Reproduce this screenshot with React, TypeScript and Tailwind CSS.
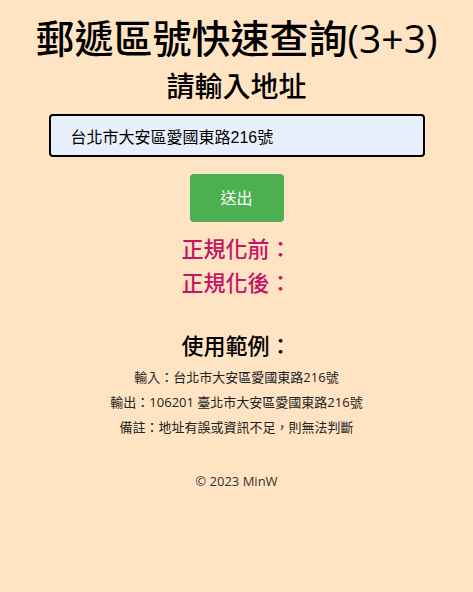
import { useState } from "react";

const font = "font-['Open_Sans','Noto_Sans_CJK_TC',sans-serif]";

export default function App() {
  const [addr, setAddr] = useState("台北市大安區愛國東路216號");

  return (
    <div className={`min-h-[592px] bg-[#ffe4c4] text-center text-black ${font}`}>
      <h1 className="pt-[10px] text-[39px] font-medium leading-[56px]">郵遞區號快速查詢(3+3)</h1>
      <h2 className="text-[28px] font-medium leading-[40px]">請輸入地址</h2>

      <div className="mt-[8px] flex justify-center">
        <input
          value={addr}
          onChange={(e) => setAddr(e.target.value)}
          className="h-[43px] w-[376px] rounded-[4px] border-2 border-black bg-[#e8f0fe] pl-[20px] font-['Liberation_Sans','Noto_Sans_CJK_TC',sans-serif] text-[16px] outline-none"
        />
      </div>

      <button className="mt-[17px] h-[48px] w-[94px] rounded-[4px] bg-[#4caf50] text-[16px] text-white">
        送出
      </button>

      <div className="mt-[9px] text-[22px] font-medium leading-[34px] text-[#c41565]">
        <p>正規化前：</p>
        <p>正規化後：</p>
      </div>

      <h3 className="mt-[28px] text-[22px] font-medium leading-[36px]">使用範例：</h3>
      <div className="mt-[6px] space-y-[9px] text-[13px] leading-[16px] text-[#222]">
        <p>輸入：台北市大安區愛國東路216號</p>
        <p>輸出：106201 臺北市大安區愛國東路216號</p>
        <p>備註：地址有誤或資訊不足，則無法判斷</p>
      </div>

      <p className="mt-[37px] text-[13px] text-[#333]">© 2023 MinW</p>
    </div>
  );
}
